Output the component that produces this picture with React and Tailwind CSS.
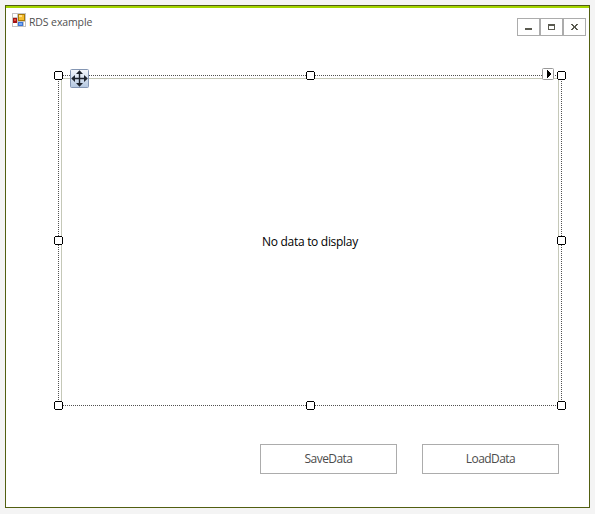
const HANDLES = [
  'left-[-4px] top-[-4px]',
  'left-[248px] top-[-4px]',
  'left-[499px] top-[-4px]',
  'left-[-4px] top-[161px]',
  'left-[499px] top-[161px]',
  'left-[-4px] top-[326px]',
  'left-[248px] top-[326px]',
  'left-[499px] top-[326px]',
];

function Handle({ className }) {
  return (
    <svg className={`absolute ${className}`} width="9" height="9" shapeRendering="crispEdges">
      <rect width="9" height="9" fill="#fff" />
      <path d="M1 0h7v1h1v7h-1v1h-7v-1h-1v-7h1z" fill="#000" />
      <rect x="1" y="1" width="7" height="7" fill="#fff" />
    </svg>
  );
}

function FormIcon() {
  return (
    <svg width="14" height="14" shapeRendering="crispEdges">
      <rect width="14" height="14" fill="#c4c4c4" />
      <rect x="1" y="1" width="4" height="3" fill="#fff" />
      <rect x="1" y="10" width="4" height="3" fill="#fff" />
      <rect x="12" y="9" width="1" height="4" fill="#fff" />
      <rect x="6" y="1" width="7" height="7" fill="#a87908" />
      <rect x="7" y="2" width="5" height="5" fill="#f5bd2e" />
      <rect x="7" y="2" width="3" height="2" fill="#ffe18a" />
      <rect x="1" y="5" width="4" height="5" fill="#a51212" />
      <rect x="2" y="6" width="2" height="2" fill="#e04a3c" />
      <rect x="6" y="9" width="5" height="4" fill="#3b76d6" />
      <rect x="7" y="10" width="3" height="2" fill="#78a8f4" />
    </svg>
  );
}

function MoveGrip() {
  return (
    <svg className="absolute left-3 top-[-6px]" width="19" height="19">
      <defs>
        <linearGradient id="grip" x1="0" y1="0" x2="0" y2="1">
          <stop offset="0" stopColor="#f5f8fc" />
          <stop offset="1" stopColor="#b4c7e0" />
        </linearGradient>
      </defs>
      <rect x=".5" y=".5" width="18" height="18" rx="1" fill="url(#grip)" stroke="#8496b3" />
      <path d="M8.8 4h1.4v11h-1.4zM4 8.8h11v1.4h-11z" fill="#1c222c" />
      <path d="M9.5 1.2l3.5 3.8h-7zM9.5 17.8l3.5-3.8h-7zM1.2 9.5l3.8-3.5v7zM17.8 9.5l-3.8-3.5v7z" fill="#1c222c" />
    </svg>
  );
}

function SmartTag() {
  return (
    <svg className="absolute left-[484px] top-[-7px]" width="12" height="12">
      <rect x=".5" y=".5" width="11" height="11" rx="1" fill="#fff" stroke="#999" />
      <path d="M5 2h1v1h1v1h1v1h1v2h-1v1h-1v1h-1v1h-1z" fill="#000" shapeRendering="crispEdges" />
    </svg>
  );
}

function WindowButtons() {
  return (
    <div className="mt-2.5 mr-[3px] flex h-[18px] w-[69px] bg-white">
      <button className="flex w-[23px] items-center justify-center border border-[#acacac]">
        <svg width="7" height="7" shapeRendering="crispEdges"><path d="M0 4h7v2h-7z" fill="#5a5a50" /></svg>
      </button>
      <button className="flex w-[23px] items-center justify-center border border-[#acacac]">
        <svg width="7" height="6" shapeRendering="crispEdges"><path fillRule="evenodd" d="M0 0h7v6h-7zM1 2v3h5v-3z" fill="#5a5a50" /></svg>
      </button>
      <button className="flex w-[23px] items-center justify-center border border-[#acacac]">
        <svg width="7" height="6" shapeRendering="crispEdges">
          <path d="M0 0h2v1h1v1h1v-1h1v-1h2v1h-1v1h-1v2h1v1h1v1h-2v-1h-1v-1h-1v1h-1v1h-2v-1h1v-1h1v-2h-1v-1h-1z" fill="#5a5a50" />
        </svg>
      </button>
    </div>
  );
}

function FormButton({ children }) {
  return (
    <button className="flex h-[30px] w-[137px] items-center justify-center border border-[#acacac] bg-white text-[12px] leading-[16px] tracking-[-0.55px] text-[#4c4c4c]">
      {children}
    </button>
  );
}

export default function App() {
  return (
    <div className="h-[514px] w-[595px] overflow-hidden bg-[#f4f4f4] p-[5px] font-['Open_Sans','Noto_Sans',sans-serif]">
      <main className="flex h-[503px] w-[585px] flex-col border border-[#525f11] bg-white">
        <div className="h-0.5 shrink-0 bg-[#a5d600]" />
        <header className="flex h-[67px] shrink-0 items-start justify-between pl-1.5">
          <div className="mt-[5px] flex items-start gap-[3px]">
            <FormIcon />
            <span className="mt-[2px] text-[10.5px] leading-[14px] tracking-[-0.12px] text-[#505050]">RDS example</span>
          </div>
          <WindowButtons />
        </header>
        <section className="relative ml-[52px] flex h-[331px] w-[504px] shrink-0 px-[3px] pt-[3px] pb-[3px]">
          <div className="pointer-events-none absolute inset-0 border border-dotted border-[#505050]" />
          <div className="flex w-full items-center justify-center border border-b-0 border-[#c5c8b8] pt-px">
            <span className="text-[12px] leading-[16px] tracking-[-0.3px] text-black">No data to display</span>
          </div>
          {HANDLES.map((position) => (
            <Handle key={position} className={position} />
          ))}
          <MoveGrip />
          <SmartTag />
        </section>
        <footer className="mt-[38px] flex gap-[25px] pl-[254px]">
          <FormButton>SaveData</FormButton>
          <FormButton>LoadData</FormButton>
        </footer>
      </main>
    </div>
  );
}
